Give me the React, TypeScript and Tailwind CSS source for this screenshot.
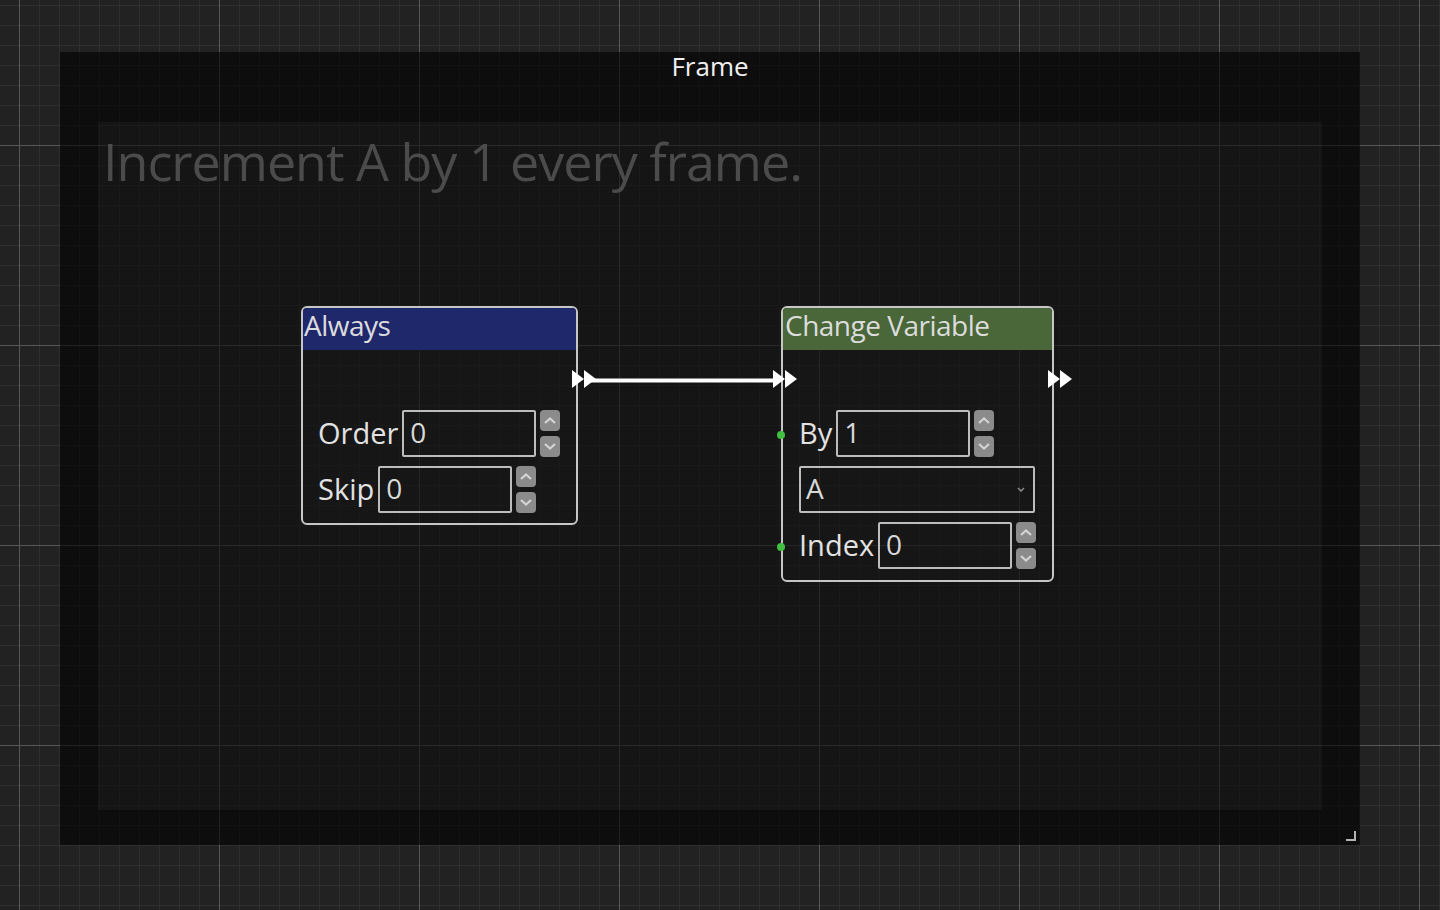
import React from 'react';

const Chevron = ({ up }: { up?: boolean }) => (
  <svg width="14" height="9" viewBox="0 0 14 9">
    <path d={up ? 'M2 7 L7 2.5 L12 7' : 'M2 2 L7 6.5 L12 2'} stroke="#d4d4d4" strokeWidth="2.2" fill="none" />
  </svg>
);

const Spin = () => (
  <div className="flex flex-col gap-[5px]">
    <div className="w-[20px] h-[21px] rounded-[4px] bg-[#8b8b8b] flex items-center justify-center">
      <Chevron up />
    </div>
    <div className="w-[20px] h-[21px] rounded-[4px] bg-[#8b8b8b] flex items-center justify-center">
      <Chevron />
    </div>
  </div>
);

const NumberRow = ({ label, value }: { label: string; value: string }) => (
  <div className="flex items-center h-[47px]">
    <span className="text-[29px] leading-none text-[#e2e2e2] -mt-[3px]">{label}</span>
    <div className="ml-[4px] w-[134px] h-[47px] border-2 border-[#bdbdbd] rounded-[2px] flex items-center pl-[6px] pb-[3px] text-[28px] leading-none text-[#d8d8d8]">
      {value}
    </div>
    <div className="ml-[4px]">
      <Spin />
    </div>
  </div>
);

const ExecPin = () => (
  <svg width="26" height="20" viewBox="0 0 26 20">
    <polygon points="0,1 12,10 0,19" fill="#ffffff" />
    <polygon points="12,1 24,10 12,19" fill="#ffffff" />
  </svg>
);

const DataPin = () => <div className="w-[8px] h-[8px] rounded-full bg-[#41bf41]" />;

export default function App() {
  return (
    <div className="relative w-[1440px] h-[910px] overflow-hidden bg-[#222222] font-['Open_Sans',sans-serif]">
      {/* canvas grid */}
      <svg className="absolute inset-0" width="1440" height="910">
        <defs>
          <pattern id="minor" width="20" height="20" patternUnits="userSpaceOnUse">
            <rect x="19" y="0" width="1" height="20" fill="#2f2f2f" />
            <rect x="0" y="5" width="20" height="1" fill="#2f2f2f" />
          </pattern>
          <pattern id="major" width="200" height="200" patternUnits="userSpaceOnUse">
            <rect x="19" y="0" width="1" height="200" fill="#575757" />
            <rect x="0" y="145" width="200" height="1" fill="#575757" />
          </pattern>
        </defs>
        <rect width="1440" height="910" fill="url(#minor)" />
        <rect width="1440" height="910" fill="url(#major)" />
      </svg>

      {/* frame */}
      <div className="absolute left-[60px] top-[52px] w-[1300px] h-[793px] bg-black/60 flex flex-col">
        <div className="h-[70px] flex justify-center">
          <span className="text-[26px] leading-none text-[#f0f0f0] pt-[1px]">Frame</span>
        </div>
        <div className="ml-[38px] w-[1224px] h-[690px] bg-white/[0.037] border-b-2 border-black/40">
          <div className="pl-[5px] pt-[13px] text-[52px] leading-none text-[#4b4b4b] tracking-[-1px]">
            Increment A by 1 every frame.
          </div>
        </div>
        <div className="absolute right-[4px] bottom-[4px] w-[10px] h-[10px] border-r-2 border-b-2 border-[#b4b4b4]" />
      </div>

      {/* wire */}
      <svg className="absolute left-0 top-0" width="1440" height="910">
        <line x1="590" y1="380.5" x2="778" y2="380.5" stroke="#ffffff" strokeWidth="4" />
      </svg>

      {/* Always node */}
      <div className="absolute left-[301px] top-[306px] w-[277px] h-[219px] border-2 border-[#c6c6c6] rounded-[6px] bg-[#1a1a1a]/30">
        <div className="h-[42px] bg-[#20286c] rounded-t-[4px] pl-[1px] pt-[3px]">
          <span className="text-[28px] leading-none text-[#dcdcdc] tracking-[-0.5px]">Always</span>
        </div>
        <div className="h-[60px]" />
        <div className="flex flex-col gap-[9px] pl-[15px]">
          <NumberRow label="Order" value="0" />
          <NumberRow label="Skip" value="0" />
        </div>
        <div className="absolute left-[269px] top-[61px]">
          <ExecPin />
        </div>
      </div>

      {/* Change Variable node */}
      <div className="absolute left-[781px] top-[306px] w-[273px] h-[276px] border-2 border-[#c6c6c6] rounded-[6px] bg-[#1a1a1a]/30">
        <div className="h-[42px] bg-[#496739] rounded-t-[4px] pl-[2px] pt-[3px]">
          <span className="text-[28px] leading-none text-[#dcdcdc] tracking-[-0.5px]">Change Variable</span>
        </div>
        <div className="h-[60px]" />
        <div className="flex flex-col gap-[9px] pl-[16px]">
          <NumberRow label="By" value="1" />
          <div className="w-[236px] h-[47px] border-2 border-[#bdbdbd] rounded-[2px] flex items-center justify-between pl-[5px] pr-[8px]">
            <span className="text-[28px] leading-none text-[#d8d8d8] -mt-[3px]">A</span>
            <svg width="8" height="5" viewBox="0 0 8 5">
              <path d="M1 1 L4 4 L7 1" stroke="#8a8a8a" strokeWidth="1.5" fill="none" />
            </svg>
          </div>
          <NumberRow label="Index" value="0" />
        </div>
        <div className="absolute left-[-10px] top-[61px]">
          <ExecPin />
        </div>
        <div className="absolute left-[265px] top-[61px]">
          <ExecPin />
        </div>
        <div className="absolute left-[-6px] top-[123px]">
          <DataPin />
        </div>
        <div className="absolute left-[-6px] top-[235px]">
          <DataPin />
        </div>
      </div>
    </div>
  );
}
